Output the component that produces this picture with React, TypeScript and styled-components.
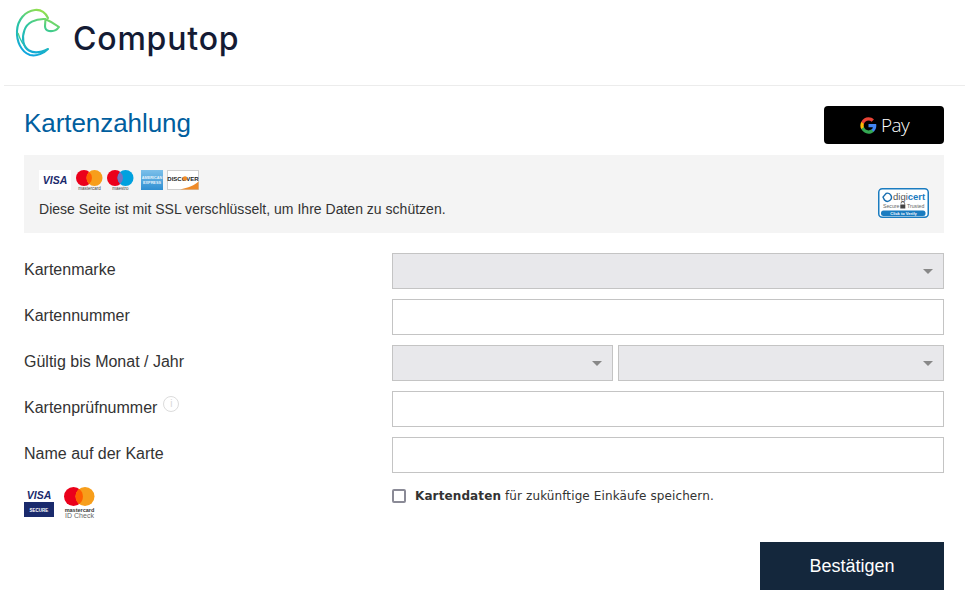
import { FC } from 'react'
import styled, { createGlobalStyle } from 'styled-components'

const GlobalStyle = createGlobalStyle`
    html, body {
        margin: 0;
        padding: 0;
        background: #fff;
        font-family: "Liberation Sans", Arial, sans-serif;
        color: #333;
    }
`;

const Page = styled.div`
    width: 970px;
    height: 616px;
    box-sizing: border-box;
    overflow: hidden;
`;

const Header = styled.header`
    height: 86px;
    margin: 0 5px 0 4px;
    padding: 8px 0 0 11px;
    box-sizing: border-box;
    border-bottom: 1px solid #ececec;
    display: flex;
    align-items: flex-start;
`;

const LogoMark = styled.svg`
    width: 50px;
    height: 52px;
    display: block;
`;

const LogoText = styled.div`
    margin: 10px 0 0 8px;
    font-family: Inter, sans-serif;
    font-weight: 500;
    font-size: 32px;
    line-height: 42px;
    letter-spacing: 0.8px;
    color: #141b34;
`;

const Main = styled.main`
    padding: 20px 26px 0 24px;
`;

const TitleRow = styled.div`
    display: flex;
    justify-content: space-between;
    align-items: flex-start;
    height: 38px;
`;

const Title = styled.h1`
    margin: 0;
    font-size: 26px;
    line-height: 34px;
    font-weight: 400;
    letter-spacing: -0.06px;
    color: #005e9e;
`;

const GPayButton = styled.button`
    width: 120px;
    height: 38px;
    border: 0;
    border-radius: 4px;
    background: #000;
    color: #fff;
    padding: 0 0 0 1px;
    display: flex;
    align-items: center;
    justify-content: center;
    gap: 4px;
    font-family: "Open Sans", sans-serif;
    font-weight: 300;
    font-size: 19px;
    letter-spacing: -0.6px;
`;

const GMark = styled.svg`
    width: 17px;
    height: 17px;
`;

const InfoBox = styled.section`
    margin-top: 11px;
    height: 78px;
    background: #f4f4f4;
    padding: 15px 15px 0 15px;
    box-sizing: border-box;
    display: flex;
    justify-content: space-between;
`;

const InfoLeft = styled.div`
    display: flex;
    flex-direction: column;
`;

const CardRow = styled.div`
    display: flex;
    align-items: flex-start;
    height: 20px;
`;

const CardSvg = styled.svg<{ $gap?: number }>`
    display: block;
    margin-left: ${p => p.$gap ?? 0}px;
`;

const InfoText = styled.p`
    margin: 11px 0 0;
    font-size: 14px;
    line-height: 16px;
    letter-spacing: 0.015px;
    color: #333;
`;

const DigiCertSvg = styled.svg`
    width: 51px;
    height: 30px;
    margin: 18px 0 0;
    display: block;
`;

const Form = styled.form`
    margin-top: 20px;
    display: flex;
    flex-direction: column;
    gap: 10px;
`;

const Row = styled.div`
    display: grid;
    grid-template-columns: 368px 552px;
    align-items: center;
    min-height: 36px;
`;

const Label = styled.label`
    font-size: 16px;
    color: #333;
    display: flex;
    align-items: flex-start;
    position: relative;
    top: -1px;
`;

const InfoDot = styled.span`
    width: 14px;
    height: 14px;
    margin: -3px 0 0 6px;
    border: 1px solid #dcdcdc;
    border-radius: 50%;
    font-size: 10px;
    line-height: 14px;
    text-align: center;
    color: #d8d8d8;
`;

const Input = styled.input`
    width: 100%;
    height: 36px;
    box-sizing: border-box;
    border: 1px solid #c4c4c4;
    background: #fff;
    outline: none;
    padding: 0 10px;
    display: block;
`;

const SelectWrap = styled.div<{ $width?: number }>`
    position: relative;
    width: ${p => (p.$width ? `${p.$width}px` : '100%')};
    height: 36px;

    &::after {
        content: '';
        position: absolute;
        right: 11px;
        top: 16px;
        border-left: 5px solid transparent;
        border-right: 5px solid transparent;
        border-top: 5px solid #888;
        pointer-events: none;
    }
`;

const Select = styled.select`
    appearance: none;
    width: 100%;
    height: 36px;
    box-sizing: border-box;
    border: 1px solid #c4c4c4;
    border-radius: 0;
    background: #e8e8eb;
    outline: none;
    display: block;
`;

const SplitField = styled.div`
    display: flex;
    justify-content: space-between;
`;

const CheckRow = styled.div`
    margin-top: 4px;
    display: grid;
    grid-template-columns: 368px 552px;
    align-items: start;
`;

const SecureLogos = styled.div`
    display: flex;
    gap: 9px;
`;

const CheckLabel = styled.label`
    display: flex;
    align-items: center;
    gap: 9px;
    padding-top: 1px;
    font-family: "DejaVu Sans", sans-serif;
    font-size: 12px;
    line-height: 16px;
    letter-spacing: 0.11px;
    color: #333;
    b {
        font-weight: 700;
    }
`;

const CheckBox = styled.input`
    appearance: none;
    width: 14px;
    height: 14px;
    margin: 0;
    border: 2px solid #8a8a96;
    border-radius: 2px;
    box-sizing: border-box;
    background: #fff;
`;

const Actions = styled.div`
    margin-top: 23px;
    display: flex;
    justify-content: flex-end;
`;

const SubmitButton = styled.button`
    width: 184px;
    height: 48px;
    border: 0;
    background: #14273c;
    color: #fff;
    font-family: "Liberation Sans", Arial, sans-serif;
    font-size: 18px;
`;

const Logo: FC = () => (
    <LogoMark viewBox="0 0 50 52" fill="none">
        <defs>
            <linearGradient id="lg" x1="0.7" y1="0" x2="0.3" y2="1">
                <stop offset="0" stopColor="#9fe244" />
                <stop offset="0.45" stopColor="#2dc6a0" />
                <stop offset="1" stopColor="#0ea5e0" />
            </linearGradient>
        </defs>
        <path
            d="M33 10C30 4 25 1.500 20 2C10 3 2.500 12 2 23C1.500 33 6 44 15 47C22 48.500 29 45 33 41C26 44.500 19 45.500 14 42.500C8 39 6.500 30 9.500 22C12 15 20 10.500 30 11C35 13 40 16 44 19C42 22 38 23.500 34 23C31 22.500 30 21 30 18L30.500 11"
            stroke="url(#lg)"
            strokeWidth="2.100"
            strokeLinejoin="round"
            strokeLinecap="round"
        />
        <path d="M14 42.500C9 38 5 32 3 25" stroke="url(#lg)" strokeWidth="1.300" />
    </LogoMark>
);

const GoogleG: FC = () => (
    <GMark viewBox="0 0 48 48">
        <path fill="#4285f4" d="M46 24.500c0-1.600-.1-3.100-.4-4.500H24v8.700h12.400c-.5 2.900-2.100 5.300-4.600 6.900v5.700h7.400C43.500 36.400 46 31 46 24.500z" />
        <path fill="#34a853" d="M24 47c6.200 0 11.400-2 15.200-5.700l-7.400-5.700c-2 1.400-4.700 2.200-7.800 2.200-6 0-11.100-4-12.900-9.500H3.500v5.900C7.300 41.700 15 47 24 47z" />
        <path fill="#fbbc04" d="M11.100 28.300c-.5-1.400-.7-2.800-.7-4.300s.3-2.900.7-4.300v-5.900H3.500C2 16.900 1 20.300 1 24s.9 7.100 2.500 10.200l7.600-5.900z" />
        <path fill="#ea4335" d="M24 10.200c3.400 0 6.400 1.200 8.800 3.400l6.600-6.600C35.400 3.300 30.200 1 24 1 15 1 7.300 6.300 3.500 13.800l7.600 5.900c1.800-5.500 6.900-9.500 12.900-9.500z" />
    </GMark>
);

const VisaCard: FC = () => (
    <CardSvg width="32" height="20" viewBox="0 0 32 20">
        <rect width="32" height="20" fill="#fff" />
        <text x="16" y="14" textAnchor="middle" fontFamily="Liberation Sans" fontStyle="italic" fontWeight="700" fontSize="10.500" fill="#1a2a6c">VISA</text>
    </CardSvg>
);

const McCircles: FC<{ second: string; mix: string; label: string; gap?: number }> = ({ second, mix, label, gap }) => (
    <CardSvg $gap={gap} width="27" height="20" viewBox="0 0 27 20">
        <circle cx="8" cy="8" r="8" fill="#eb001b" />
        <circle cx="18.500" cy="8" r="8" fill={second} />
        <path d="M13.250 2a8 8 0 0 1 0 12a8 8 0 0 1 0-12z" fill={mix} />
        <text x="13.500" y="19.500" textAnchor="middle" fontFamily="Liberation Sans" fontSize="4.500" fill="#444">{label}</text>
    </CardSvg>
);

const AmexCard: FC = () => (
    <CardSvg $gap={7} width="22" height="20" viewBox="0 0 22 20">
        <defs>
            <linearGradient id="amex" x1="0" y1="0" x2="0" y2="1">
                <stop offset="0" stopColor="#7cc0ea" />
                <stop offset="1" stopColor="#2f8fd2" />
            </linearGradient>
        </defs>
        <rect width="22" height="20" fill="url(#amex)" />
        <text x="11" y="9" textAnchor="middle" fontFamily="Liberation Sans" fontWeight="700" fontSize="3.800" fill="#e6f2fb">AMERICAN</text>
        <text x="11" y="13.500" textAnchor="middle" fontFamily="Liberation Sans" fontWeight="700" fontSize="3.800" fill="#e6f2fb">EXPRESS</text>
    </CardSvg>
);

const DiscoverCard: FC = () => (
    <CardSvg $gap={4} width="32" height="20" viewBox="0 0 32 20">
        <rect x="0.500" y="0.500" width="31" height="19" fill="#fff" stroke="#cfcfcf" />
        <path d="M13 19.500C21 18 28 15 31.500 11.500V19.500z" fill="#ee8a28" />
        <text x="16" y="10.500" textAnchor="middle" fontFamily="Liberation Sans" fontWeight="700" fontSize="6" fill="#222">DISCOVER</text>
        <circle cx="18" cy="8.500" r="2.200" fill="#f08a24" />
    </CardSvg>
);

const DigiCert: FC = () => (
    <DigiCertSvg viewBox="0 0 51 30">
        <rect x="0.750" y="0.750" width="49.500" height="28.500" rx="3.500" fill="#fff" stroke="#1a7cc0" strokeWidth="1.500" />
        <path d="M8 5.500a4 4 0 1 1-1.500 6.500L5 9z" fill="none" stroke="#1a6fb0" strokeWidth="1.400" />
        <text x="15" y="12" fontFamily="Liberation Sans" fontSize="9.500" fill="#555">digi<tspan fontWeight="700" fill="#1a7cc0">cert</tspan></text>
        <text x="5" y="20" fontFamily="Liberation Sans" fontSize="5.200" fill="#666">Secure</text>
        <path d="M23 15.500a1.800 1.800 0 0 1 3.600 0v1" fill="none" stroke="#444" strokeWidth="0.800" />
        <rect x="22.300" y="16.500" width="5" height="4" fill="#444" />
        <text x="29" y="20" fontFamily="Liberation Sans" fontSize="5.200" fill="#666">Trusted</text>
        <rect x="3" y="22.500" width="44.500" height="5.500" rx="2.500" fill="#1a7cc0" />
        <text x="25.500" y="26.700" textAnchor="middle" fontFamily="Liberation Sans" fontWeight="700" fontSize="4" fill="#fff">Click to Verify</text>
    </DigiCertSvg>
);

const VisaSecure: FC = () => (
    <CardSvg width="31" height="30" viewBox="0 0 31 30">
        <text x="15" y="12" textAnchor="middle" fontFamily="Liberation Sans" fontStyle="italic" fontWeight="700" fontSize="10.500" fill="#1a2a6c">VISA</text>
        <rect x="0" y="15" width="30" height="15" fill="#1a2a6c" />
        <text x="15" y="24.500" textAnchor="middle" fontFamily="Liberation Sans" fontWeight="700" fontSize="4.500" fill="#fff">SECURE</text>
    </CardSvg>
);

const IdCheck: FC = () => (
    <CardSvg width="32" height="32" viewBox="0 0 32 32">
        <circle cx="9.500" cy="9.500" r="9.500" fill="#eb001b" />
        <circle cx="21" cy="9.500" r="9.500" fill="#f79e1b" />
        <path d="M15.250 2a9.500 9.500 0 0 1 0 15a9.500 9.500 0 0 1 0-15z" fill="#ff5f00" />
        <text x="15.500" y="25" textAnchor="middle" fontFamily="Liberation Sans" fontWeight="700" fontSize="5.500" fill="#333">mastercard</text>
        <text x="15.500" y="31" textAnchor="middle" fontFamily="Liberation Sans" fontSize="7" fill="#666">ID Check</text>
    </CardSvg>
);

const App: FC = () => {
    return (
        <Page>
            <GlobalStyle />
            <Header>
                <Logo />
                <LogoText>Computop</LogoText>
            </Header>
            <Main>
                <TitleRow>
                    <Title>Kartenzahlung</Title>
                    <GPayButton type="button">
                        <GoogleG />
                        Pay
                    </GPayButton>
                </TitleRow>
                <InfoBox>
                    <InfoLeft>
                        <CardRow>
                            <VisaCard />
                            <McCircles gap={5} second="#f79e1b" mix="#ff5f00" label="mastercard" />
                            <McCircles gap={4} second="#00a1df" mix="#7673c0" label="maestro" />
                            <AmexCard />
                            <DiscoverCard />
                        </CardRow>
                        <InfoText>Diese Seite ist mit SSL verschlüsselt, um Ihre Daten zu schützen.</InfoText>
                    </InfoLeft>
                    <DigiCert />
                </InfoBox>
                <Form>
                    <Row>
                        <Label>Kartenmarke</Label>
                        <SelectWrap><Select /></SelectWrap>
                    </Row>
                    <Row>
                        <Label>Kartennummer</Label>
                        <Input type="text" />
                    </Row>
                    <Row>
                        <Label>Gültig bis Monat / Jahr</Label>
                        <SplitField>
                            <SelectWrap $width={221}><Select /></SelectWrap>
                            <SelectWrap $width={326}><Select /></SelectWrap>
                        </SplitField>
                    </Row>
                    <Row>
                        <Label>Kartenprüfnummer<InfoDot>i</InfoDot></Label>
                        <Input type="text" />
                    </Row>
                    <Row>
                        <Label>Name auf der Karte</Label>
                        <Input type="text" />
                    </Row>
                    <CheckRow>
                        <SecureLogos>
                            <VisaSecure />
                            <IdCheck />
                        </SecureLogos>
                        <CheckLabel>
                            <CheckBox type="checkbox" />
                            <span><b>Kartendaten</b> für zukünftige Einkäufe speichern.</span>
                        </CheckLabel>
                    </CheckRow>
                </Form>
                <Actions>
                    <SubmitButton type="button">Bestätigen</SubmitButton>
                </Actions>
            </Main>
        </Page>
    )
}

export default App
